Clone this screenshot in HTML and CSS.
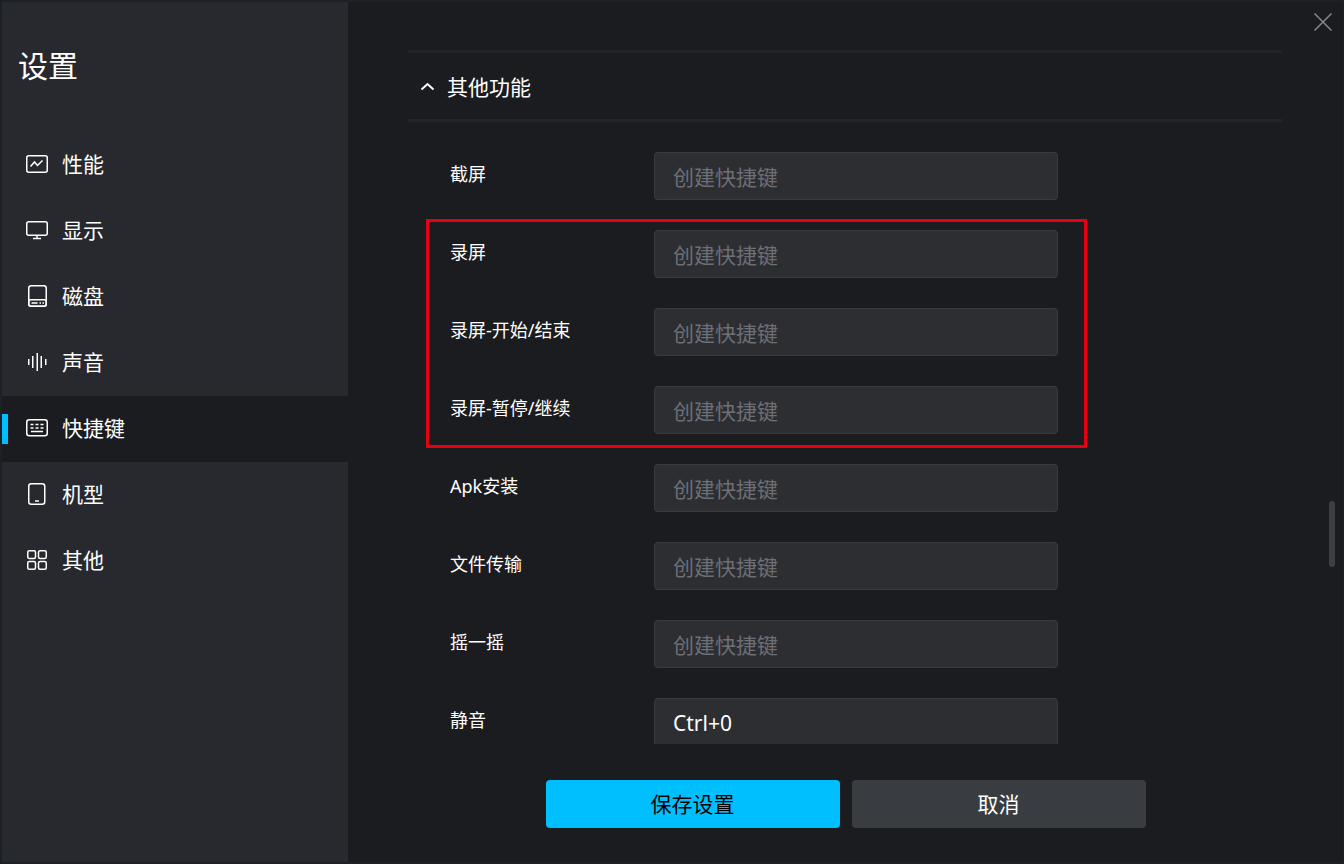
FILE: index.html
```
<!DOCTYPE html>
<html lang="zh-CN">
<head>
    <meta charset="UTF-8">
    <meta name="viewport" content="width=device-width, initial-scale=1.0">
    <title>设置</title>
    <link rel="stylesheet" href="styles.css">
</head>
<body>
    <div class="window">
        <aside class="sidebar">
            <h1>设置</h1>
            <nav class="menu">
                <a class="menu-item" href="#performance">
                    <svg width="22" height="22" viewBox="0 0 22 22" aria-hidden="true">
                        <rect x="0.75" y="2.75" width="20.5" height="16.5" rx="2"/>
                        <path d="M4.5 13.5l4-4.5 3 3.5 5-5"/>
                    </svg>
                    <span>性能</span>
                </a>
                <a class="menu-item" href="#display">
                    <svg width="22" height="22" viewBox="0 0 22 22" aria-hidden="true">
                        <rect x="0.75" y="2.75" width="20.5" height="13.5" rx="2"/>
                        <path d="M11 16.5v2.5M7 19.5h8"/>
                    </svg>
                    <span>显示</span>
                </a>
                <a class="menu-item" href="#disk">
                    <svg width="22" height="22" viewBox="0 0 22 22" aria-hidden="true">
                        <rect x="2.75" y="0.75" width="17.5" height="20.5" rx="2.5"/>
                        <rect x="2.75" y="14.75" width="17.5" height="6.5" rx="2"/>
                        <path d="M5.5 18h6M13.5 18h1.5M16.5 18h1.5"/>
                    </svg>
                    <span>磁盘</span>
                </a>
                <a class="menu-item" href="#sound">
                    <svg width="22" height="22" viewBox="0 0 22 22" aria-hidden="true">
                        <path d="M2.75 8v6M6.75 5v12M11.25 2v18M15.25 5v12M19.75 8v6"/>
                    </svg>
                    <span>声音</span>
                </a>
                <a class="menu-item active" href="#shortcuts" aria-current="page">
                    <svg width="22" height="22" viewBox="0 0 22 22" aria-hidden="true">
                        <rect x="0.75" y="2.75" width="20.5" height="16" rx="2.5"/>
                        <path d="M4.5 7.5h3M9.5 7.5h3M14.5 7.5h3M4.5 11h3M9.5 11h3M14.5 11h3M5 14.5h12"/>
                    </svg>
                    <span>快捷键</span>
                </a>
                <a class="menu-item" href="#model">
                    <svg width="22" height="22" viewBox="0 0 22 22" aria-hidden="true">
                        <rect x="2.75" y="0.75" width="16" height="20.5" rx="2.5"/>
                        <path d="M9 18h4"/>
                    </svg>
                    <span>机型</span>
                </a>
                <a class="menu-item" href="#other">
                    <svg width="22" height="22" viewBox="0 0 22 22" aria-hidden="true">
                        <rect x="1.75" y="1.75" width="7.75" height="7.75" rx="1.5"/>
                        <rect x="12.5" y="1.75" width="7.75" height="7.75" rx="1.5"/>
                        <rect x="1.75" y="12.5" width="7.75" height="7.75" rx="1.5"/>
                        <rect x="12.5" y="12.5" width="7.75" height="7.75" rx="1.5"/>
                    </svg>
                    <span>其他</span>
                </a>
            </nav>
        </aside>

        <main class="main">
            <button class="close" type="button" aria-label="关闭">
                <svg width="18" height="18" viewBox="0 0 18 18" aria-hidden="true">
                    <path d="M0.5 0.5l17 17M17.5 0.5l-17 17"/>
                </svg>
            </button>

            <form class="panel" id="shortcutForm">
                <h2 class="section">
                    <button class="section-toggle" type="button" aria-expanded="true">
                        <svg width="16" height="12" viewBox="0 0 16 12" aria-hidden="true">
                            <path d="M1.5 9.5L7.5 4l6 5.5"/>
                        </svg>
                        <span>其他功能</span>
                    </button>
                </h2>

                <div class="rows">
                    <div class="row">
                        <label for="screenshot">截屏</label>
                        <input type="text" id="screenshot" placeholder="创建快捷键">
                    </div>
                    <div class="rows-marked">
                        <div class="row">
                            <label for="record">录屏</label>
                            <input type="text" id="record" placeholder="创建快捷键">
                        </div>
                        <div class="row">
                            <label for="recordStart">录屏-开始/结束</label>
                            <input type="text" id="recordStart" placeholder="创建快捷键">
                        </div>
                        <div class="row">
                            <label for="recordPause">录屏-暂停/继续</label>
                            <input type="text" id="recordPause" placeholder="创建快捷键">
                        </div>
                    </div>
                    <div class="row">
                        <label for="apk">Apk安装</label>
                        <input type="text" id="apk" placeholder="创建快捷键">
                    </div>
                    <div class="row">
                        <label for="transfer">文件传输</label>
                        <input type="text" id="transfer" placeholder="创建快捷键">
                    </div>
                    <div class="row">
                        <label for="shake">摇一摇</label>
                        <input type="text" id="shake" placeholder="创建快捷键">
                    </div>
                    <div class="row">
                        <label for="mute">静音</label>
                        <input type="text" id="mute" placeholder="创建快捷键" value="Ctrl+0">
                    </div>
                </div>
            </form>

            <div class="scrollbar"></div>

            <footer class="actions">
                <button class="btn btn-save" type="submit" form="shortcutForm">保存设置</button>
                <button class="btn btn-cancel" type="button">取消</button>
            </footer>
        </main>
    </div>
</body>
</html>
```
FILE: styles.css
```
* {
    box-sizing: border-box;
}

body {
    margin: 0;
    background-color: #1b1c20;
    color: #fff;
    font-family: "Noto Sans", "Noto Sans CJK SC", sans-serif;
    font-size: 21px;
    font-weight: 400;
}

button, input {
    font: inherit;
    color: inherit;
}

svg {
    flex: none;
    fill: none;
    stroke: #fff;
    stroke-width: 1.5;
}

.window {
    display: flex;
    height: 100vh;
    border: 2px solid #1a2129;
    border-right-width: 1px;
}

/* Sidebar */
.sidebar {
    flex: none;
    width: 346px;
    background-color: #28292e;
}

.sidebar h1 {
    margin: 0;
    padding: 42px 16px 44px;
    font-size: 30px;
    font-weight: 400;
    line-height: 44px;
}

.menu-item {
    position: relative;
    display: flex;
    align-items: center;
    gap: 14px;
    height: 66px;
    padding: 0 24px 2px;
    color: #fff;
    text-decoration: none;
}

.menu-item span {
    padding-bottom: 2px;
}

.menu-item.active {
    background-color: #1b1c20;
}

.menu-item.active::before {
    content: "";
    position: absolute;
    left: 0;
    top: 18px;
    width: 6px;
    height: 30px;
    background-color: #00bfff;
}

/* Content */
.main {
    position: relative;
    flex: 1;
    min-width: 0;
    display: flex;
    flex-direction: column;
}

.close {
    position: absolute;
    top: 11px;
    right: 11px;
    display: flex;
    padding: 0;
    border: none;
    background: none;
    cursor: pointer;
}

.close svg {
    stroke: #85878a;
}

.panel {
    flex: 1;
    min-height: 0;
    overflow: hidden;
    padding: 48px 61px 0 60px;
}

.section {
    margin: 0;
    border-top: 3px solid #242529;
    border-bottom: 3px solid #242529;
    font-size: 21px;
    font-weight: 400;
}

.section-toggle {
    display: flex;
    align-items: center;
    gap: 11px;
    width: 100%;
    height: 66px;
    padding: 0 12px;
    border: none;
    background: none;
    cursor: pointer;
}

.section-toggle svg {
    stroke-width: 2;
}

.rows, .rows-marked {
    display: grid;
    gap: 30px;
}

.rows {
    padding: 30px 42px;
    justify-content: start;
}

.rows-marked {
    position: relative;
}

.rows-marked::after {
    content: "";
    position: absolute;
    inset: -11px -29px -14px -24px;
    border: 3px solid #e60012;
    pointer-events: none;
}

.row {
    display: flex;
}

.row label {
    width: 204px;
    font-size: 18px;
    line-height: 44px;
}

.row input {
    width: 404px;
    height: 48px;
    padding: 2px 18px 0;
    border: 1px solid #3a3b3f;
    border-radius: 4px;
    background-color: #2d2e32;
    outline: none;
}

.row input:focus {
    border-color: #00bfff;
}

.row input::placeholder {
    color: #6c6f75;
    opacity: 1;
}

.scrollbar {
    position: absolute;
    top: 499px;
    right: 8px;
    width: 6px;
    height: 66px;
    border-radius: 3px;
    background-color: #3e3f43;
}

.actions {
    display: flex;
    justify-content: center;
    gap: 12px;
    padding: 36px 24px 34px;
}

.btn {
    width: 294px;
    height: 48px;
    padding: 0 0 2px;
    border: none;
    border-radius: 4px;
    cursor: pointer;
}

.btn-save {
    background-color: #00bfff;
    color: #000;
}

.btn-cancel {
    background-color: #393d41;
}
```
